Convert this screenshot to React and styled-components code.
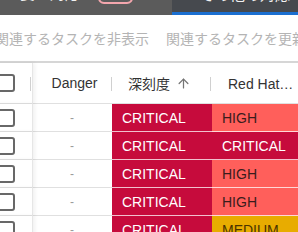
import React from "react";
import styled, { createGlobalStyle } from "styled-components";
import { ArrowUp } from "lucide-react";

const GlobalStyle = createGlobalStyle`
  html, body { margin: 0; padding: 0; background: #fff; overflow: hidden; }
  body { font-family: "Liberation Sans", "Noto Sans CJK JP", sans-serif; }
`;

const Page = styled.div`
  margin: -26px 0 0 -8px;
  width: 340px;
  overflow: hidden;
`;

const TabBar = styled.div`
  display: flex;
  height: 41px;
  background: #5b5b5b;
`;

const Tab = styled.div`
  display: flex;
  align-items: center;
  box-sizing: border-box;
  height: 100%;
  flex: ${(p) => (p.$active ? "1" : "0 0 180px")};
  padding-left: ${(p) => (p.$active ? "28px" : "13px")};
  background: ${(p) => (p.$active ? "#46494e" : "transparent")};
  border-bottom: 3px solid ${(p) => (p.$active ? "#1b6fd0" : "transparent")};
  color: #f2f2f2;
  font-size: 15px;
  white-space: nowrap;
`;

const TabLabel = styled.span`
  margin-bottom: ${(p) => (p.$active ? "0" : "2px")};
`;

const Badge = styled.span`
  display: inline-flex;
  align-items: center;
  justify-content: center;
  box-sizing: border-box;
  margin-left: 18px;
  width: 35px;
  height: 22px;
  border: 2px solid #f3a6ad;
  border-radius: 6px;
  color: #f3a6ad;
  font-size: 13px;
`;

const Toolbar = styled.div`
  display: flex;
  align-items: center;
  gap: 17px;
  height: 46px;
  padding-left: 3px;
`;

const ToolButton = styled.span`
  font-size: 14px;
  color: #b4b4b4;
  white-space: nowrap;
`;

const Table = styled.div`
  border-top: 2px solid #d6d6d6;
`;

const Row = styled.div`
  display: flex;
  box-sizing: border-box;
  height: ${(p) => (p.$header ? "41px" : "28px")};
`;

const CheckCell = styled.div`
  position: relative;
  z-index: 1;
  flex: 0 0 40px;
  display: flex;
  align-items: center;
  box-sizing: border-box;
  padding-left: 5px;
  background: #fff;
  border-bottom: 1px solid #e0e0e0;
  box-shadow: 1px 0 0 #e6e6e6, 3px 0 4px rgba(0, 0, 0, 0.06);
`;

const Checkbox = styled.span`
  display: block;
  box-sizing: border-box;
  width: 18px;
  height: 18px;
  border: 2px solid #686868;
  border-radius: 3px;
  background: #fff;
`;

const HeadCell = styled.div`
  position: relative;
  flex: 0 0 ${(p) => p.$w}px;
  display: flex;
  align-items: center;
  justify-content: ${(p) => (p.$center ? "center" : "flex-start")};
  gap: 6px;
  box-sizing: border-box;
  padding: ${(p) => (p.$center ? "0 0 0 5px" : "0 16px")};
  border-bottom: 1px solid #e0e0e0;
  font-size: 14px;
  color: #333;
  white-space: nowrap;
  overflow: hidden;
  &::after {
    content: "";
    position: absolute;
    right: ${(p) => p.$sepRight || 0}px;
    top: 14px;
    width: 1px;
    height: 14px;
    background: #d0d0d0;
  }
`;

const HeadLabel = styled.span`
  overflow: hidden;
  text-overflow: ellipsis;
`;

const HeadSep = styled.span`
  position: absolute;
  right: 1px;
  top: 14px;
  width: 1px;
  height: 14px;
  background: #d0d0d0;
`;

const Cell = styled.div`
  flex: 0 0 ${(p) => p.$w}px;
  display: flex;
  align-items: center;
  justify-content: center;
  box-sizing: border-box;
  border-bottom: 1px solid #e0e0e0;
  color: #9a9a9a;
  font-size: 12px;
`;

const levels = {
  CRITICAL: { bg: "#c60b3c", fg: "#ffffff" },
  HIGH: { bg: "#ff5f5b", fg: "#3a1c1c" },
  MEDIUM: { bg: "#e8ac00", fg: "#4a3300" },
};

const SeverityCell = styled.div`
  flex: 0 0 ${(p) => p.$w}px;
  display: flex;
  align-items: center;
  box-sizing: border-box;
  padding-left: 10px;
  background: ${(p) => levels[p.$level].bg};
  color: ${(p) => levels[p.$level].fg};
  border-bottom: 1px solid rgba(255, 255, 255, 0.75);
  font-size: 14px;
  white-space: nowrap;
`;

const rows = [
  ["CRITICAL", "HIGH"],
  ["CRITICAL", "CRITICAL"],
  ["CRITICAL", "HIGH"],
  ["CRITICAL", "HIGH"],
  ["CRITICAL", "MEDIUM"],
];

export default function App() {
  return (
    <>
      <GlobalStyle />
      <Page>
        <TabBar>
          <Tab>
            <TabLabel>重要な対応</TabLabel>
            <Badge>4</Badge>
          </Tab>
          <Tab $active>
            <TabLabel $active>その他の対応</TabLabel>
          </Tab>
        </TabBar>
        <Toolbar>
          <ToolButton>関連するタスクを非表示</ToolButton>
          <ToolButton>関連するタスクを更新</ToolButton>
        </Toolbar>
        <Table>
          <Row $header>
            <CheckCell>
              <Checkbox />
              <HeadSep />
            </CheckCell>
            <HeadCell $w={80} $center>
              Danger
            </HeadCell>
            <HeadCell $w={100} $sepRight={1}>
              <HeadLabel>深刻度</HeadLabel>
              <ArrowUp size={15} color="#757575" strokeWidth={2} />
            </HeadCell>
            <HeadCell $w={100}>
              <HeadLabel>Red Hat重要度</HeadLabel>
            </HeadCell>
          </Row>
          {rows.map(([sev, rh], i) => (
            <Row key={i}>
              <CheckCell>
                <Checkbox />
              </CheckCell>
              <Cell $w={80}>-</Cell>
              <SeverityCell $w={100} $level={sev}>
                {sev}
              </SeverityCell>
              <SeverityCell $w={100} $level={rh}>
                {rh}
              </SeverityCell>
            </Row>
          ))}
        </Table>
      </Page>
    </>
  );
}
